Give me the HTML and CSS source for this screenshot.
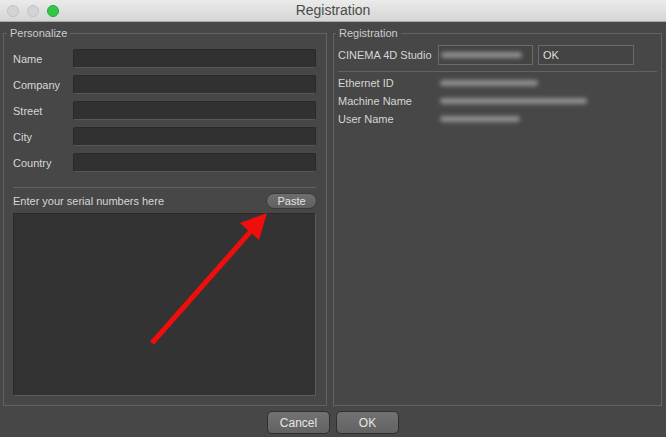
FILE: index.html
```html
<!DOCTYPE html>
<html>
<head>
<meta charset="utf-8">
<title>Registration</title>
<link rel="stylesheet" href="styles.css">
</head>
<body>
<div class="window">
  <div class="titlebar">
    <div class="lights">
      <span class="light"></span>
      <span class="light"></span>
      <span class="light green"></span>
    </div>
    <div class="title">Registration</div>
    <div></div>
  </div>
  <div class="main">
    <fieldset class="group left">
      <legend>Personalize</legend>
      <div class="form">
        <span class="lbl">Name</span><div class="input"></div>
        <span class="lbl">Company</span><div class="input"></div>
        <span class="lbl">Street</span><div class="input"></div>
        <span class="lbl">City</span><div class="input"></div>
        <span class="lbl">Country</span><div class="input"></div>
      </div>
      <div class="sep"></div>
      <div class="serial-head">
        <span class="lbl">Enter your serial numbers here</span>
        <button class="paste">Paste</button>
      </div>
      <div class="serial-box"></div>
    </fieldset>
    <fieldset class="group right">
      <legend>Registration</legend>
      <div class="prod">
        <span class="prod-name">CINEMA 4D Studio</span>
        <div class="field serial"><div class="blur w-serial"></div></div>
        <div class="field status">OK</div>
      </div>
      <div class="sep right-sep"></div>
      <div class="info">
        <span class="lbl">Ethernet ID</span><div class="blur w-eth"></div>
        <span class="lbl">Machine Name</span><div class="blur w-mach"></div>
        <span class="lbl">User Name</span><div class="blur w-user"></div>
      </div>
    </fieldset>
  </div>
  <div class="footer">
    <button class="btn">Cancel</button>
    <button class="btn">OK</button>
  </div>
  <svg class="arrow" width="666" height="437" viewBox="0 0 666 437">
    <line x1="152" y1="343" x2="251" y2="231" stroke="#f20d0d" stroke-width="5"/>
    <polygon points="267,213 240,223 259,240" fill="#f20d0d"/>
  </svg>
</div>
</body>
</html>
```

FILE: styles.css
```css
* { box-sizing: border-box; }
html, body { margin: 0; padding: 0; }
body {
  width: 666px;
  height: 437px;
  overflow: hidden;
  font-family: "Liberation Sans", Arial, sans-serif;
  background: #474747;
}
.window {
  position: relative;
  width: 666px;
  height: 437px;
  display: flex;
  flex-direction: column;
  background: #474747;
}
.titlebar {
  height: 22px;
  flex: none;
  display: grid;
  grid-template-columns: 1fr auto 1fr;
  align-items: center;
  background: linear-gradient(#ebebeb, #d5d5d5);
  border-bottom: 1px solid #a9a9a9;
}
.lights {
  display: flex;
  gap: 8px;
  padding-left: 7px;
}
.light {
  width: 12px;
  height: 12px;
  border-radius: 50%;
  background: #d4d4d4;
  border: 1px solid #c2c2c2;
}
.light.green {
  background: #33c748;
  border-color: #27a83a;
}
.title {
  font-size: 14px;
  color: #4b4b4b;
  line-height: 21px;
}
.main {
  flex: none;
  height: 384px;
  display: flex;
  gap: 6px;
  padding: 5px 4px 0 3px;
}
.group {
  margin: 0;
  min-width: 0;
  height: 379px;
  border: 1px solid #626262;
  color: #d6d6d6;
  font-size: 11px;
}
.group legend {
  font-size: 11px;
  line-height: 12px;
  color: #cdcdcd;
}
.left {
  width: 324px;
  flex: none;
  padding: 10px 10px 9px 9px;
  display: flex;
  flex-direction: column;
}
.left legend {
  margin-left: -6px;
  padding: 0 3px;
}
.right {
  flex: 1;
  padding: 6px 4px 9px 4px;
}
.right legend {
  margin-left: -2px;
  padding: 0 3px;
}
.lbl {
  font-size: 11px;
  color: #d6d6d6;
  white-space: nowrap;
}
.form {
  display: grid;
  grid-template-columns: 60px 1fr;
  grid-auto-rows: 19px;
  row-gap: 7px;
  align-items: center;
}
.input {
  height: 19px;
  background: #313131;
  border: 1px solid #2a2a2a;
  border-bottom-color: #575757;
  border-radius: 2px;
}
.sep {
  height: 1px;
  background: #626262;
  margin-top: 15px;
  flex: none;
}
.serial-head {
  margin-top: 5px;
  height: 16px;
  display: flex;
  align-items: center;
  justify-content: space-between;
  flex: none;
}
.paste {
  font-family: inherit;
  font-size: 11px;
  color: #e2e2e2;
  height: 16px;
  width: 51px;
  padding: 0;
  margin-right: -1px;
  border-radius: 8px;
  border: 1px solid #3a3a3a;
  background: linear-gradient(#6e6e6e, #606060);
  line-height: 14px;
}
.serial-box {
  margin-top: 4px;
  flex: 1;
  background: #333333;
  border: 1px solid #2a2a2a;
  border-right-color: #5a5a5a;
  border-bottom-color: #5a5a5a;
}
.prod {
  display: flex;
  align-items: center;
  height: 20px;
}
.prod-name {
  width: 100px;
  font-size: 11px;
  color: #d6d6d6;
}
.field {
  height: 20px;
  border: 1px solid #6a6a6a;
  background: #444444;
}
.serial {
  width: 95px;
  display: flex;
  align-items: center;
  padding-left: 2px;
}
.status {
  width: 96px;
  margin-left: 5px;
  font-size: 11px;
  line-height: 18px;
  padding-left: 4px;
  color: #dedede;
}
.right-sep {
  margin-top: 6px;
}
.info {
  margin-top: 2px;
  display: grid;
  grid-template-columns: 102px 1fr;
  grid-auto-rows: 18px;
  align-items: center;
}
.blur {
  height: 6px;
  background: #8e8e8e;
  filter: blur(2px);
  border-radius: 3px;
}
.w-serial { width: 81px; }
.w-eth { width: 98px; }
.w-mach { width: 147px; }
.w-user { width: 80px; }
.footer {
  flex: 1;
  display: flex;
  justify-content: center;
  gap: 6px;
  padding-top: 5px;
}
.btn {
  font-family: inherit;
  font-size: 12px;
  color: #e6e6e6;
  width: 63px;
  height: 23px;
  padding: 0;
  border-radius: 5px;
  border: 1px solid #2f2f2f;
  background: linear-gradient(#727272, #626262);
}
.arrow {
  position: absolute;
  left: 0;
  top: 0;
  pointer-events: none;
}
```
